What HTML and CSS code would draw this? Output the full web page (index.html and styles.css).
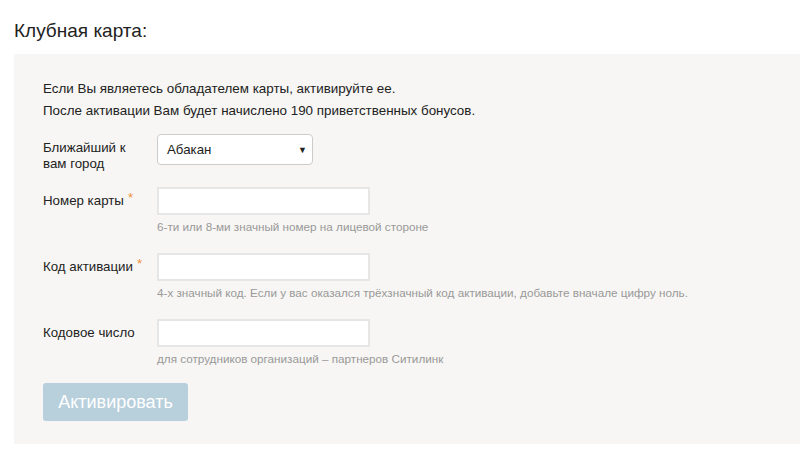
FILE: index.html
```html
<!DOCTYPE html>
<html lang="ru">
<head>
  <meta charset="UTF-8">
  <title>Клубная карта</title>
  <link rel="stylesheet" href="styles.css">
</head>
<body>
  <h1 class="title">Клубная карта:</h1>

  <div class="card-panel">
    <p class="intro">Если Вы являетесь обладателем карты, активируйте ее.</p>
    <p class="intro">После активации Вам будет начислено 190 приветственных бонусов.</p>

    <!-- city -->
    <div class="row row-city">
      <label class="label">Ближайший к вам город</label>
      <div class="field">
        <div class="select">
          <span>Абакан</span>
          <span class="arrow">&#9660;</span>
        </div>
      </div>
    </div>

    <div class="row">
      <label class="label">Номер карты<span class="req">*</span></label>
      <div class="field">
        <input class="input" type="text">
        <div class="hint">6-ти или 8-ми значный номер на лицевой стороне</div>
      </div>
    </div>

    <div class="row">
      <label class="label">Код активации<span class="req">*</span></label>
      <div class="field">
        <input class="input" type="text">
        <div class="hint">4-х значный код. Если у вас оказался трёхзначный код активации, добавьте вначале цифру ноль.</div>
      </div>
    </div>

    <div class="row">
      <label class="label">Кодовое число</label>
      <div class="field">
        <input class="input" type="text">
        <div class="hint">для сотрудников организаций – партнеров Ситилинк</div>
      </div>
    </div>

    <button class="btn" disabled>Активировать</button>
  </div>
</body>
</html>
```

FILE: styles.css
```css
body {
  margin: 0;
  font-family: "Liberation Sans", Arial, sans-serif;
  color: #222;
  background: #fff;
}
.title {
  margin: 0;
  padding: 20px 0 0 14px;
  height: 34px;
  font-size: 19px;
  font-weight: normal;
  line-height: 22px;
}
.card-panel {
  margin-left: 14px;
  padding: 24px 29px 23px;
  background-color: #f7f6f4;
}
.intro {
  margin: 0;
  font-size: 13.4px;
  line-height: 22px;
}
.row {
  display: grid;
  grid-template-columns: 114px 1fr;
  margin-top: 18px;
  font-size: 13.3px;
}
.row-city {
  height: 31px;
  margin-top: 12px;
}
.row-city + .row {
  margin-top: 22px;
}
.label {
  padding-top: 6px;
  line-height: 16px;
}
.row-city .label {
  padding-right: 10px;
}
.req {
  margin-left: 4px;
  color: #f0913a;
  position: relative;
  top: -3px;
}
.select {
  display: flex;
  justify-content: space-between;
  align-items: center;
  box-sizing: border-box;
  width: 156px;
  height: 31px;
  padding: 0 5px 0 9px;
  background: #fff;
  border: 1px solid #ccc;
  border-radius: 4px;
  font-size: 13.3px;
}
.arrow {
  font-size: 9px;
}
.input {
  display: block;
  box-sizing: border-box;
  width: 213px;
  height: 28px;
  margin: 0;
  background: #fff;
  border: 2px solid #e6e6e6;
}
.hint {
  margin-top: 4px;
  font-size: 11.7px;
  line-height: 16px;
  color: #999;
}
.btn {
  display: block;
  margin-top: 16px;
  width: 145px;
  height: 38px;
  padding: 0;
  background-color: #b8cfdc;
  color: #fff;
  border: none;
  border-radius: 3px;
  font-family: inherit;
  font-size: 18px;
}
```
